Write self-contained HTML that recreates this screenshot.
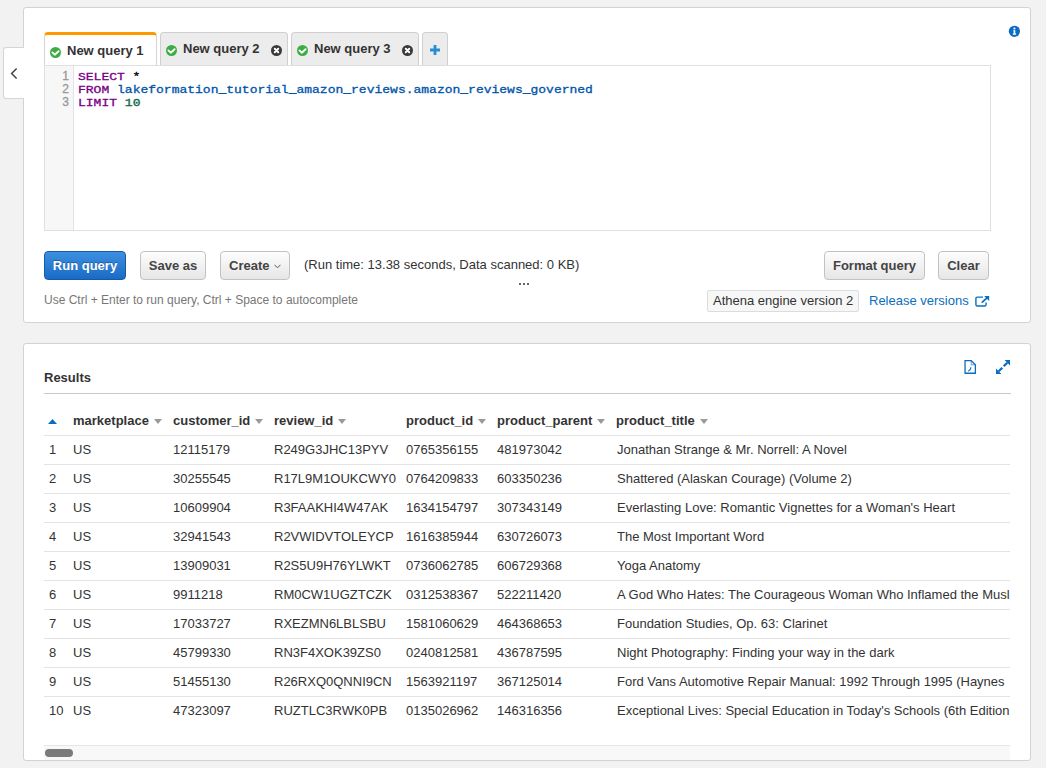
<!DOCTYPE html>
<html><head><meta charset="utf-8">
<style>
*{box-sizing:border-box;margin:0;padding:0}
html,body{width:1046px;height:768px;overflow:hidden;background:#f2f2f2;font-family:"Liberation Sans",sans-serif;color:#333}
.abs{position:absolute}
.panel{position:absolute;left:23px;width:1008px;background:#fff;border:1px solid #d3d3d3;border-radius:3px}
#p1{top:7px;height:316px}
#p2{top:343px;height:418px}
#collapse{position:absolute;left:3px;top:47px;width:21px;height:52px;background:#fff;border:1px solid #d5d5d5;border-right:none;border-radius:3px 0 0 3px}
.tab{position:absolute;top:32px;height:34px;background:#ececec;border:1px solid #cfcfcf;border-bottom:none;border-radius:4px 4px 0 0;font-weight:bold;font-size:13px;color:#333}
.tab.active{background:#fff;border-top:3px solid #ff9900;border-color:#ff9900 #d5d5d5 #d5d5d5 #d5d5d5}
.tab .lbl{position:absolute;top:8px;white-space:nowrap}
.chk{position:absolute;width:11px;height:11px}
.cls{position:absolute;width:11px;height:11px}
#editor{position:absolute;left:44px;top:65px;width:947px;height:166px;border:1px solid #e0e0e0;background:#fff}
#gutter{position:absolute;left:0;top:0;width:29px;height:164px;background:#f7f7f7;border-right:1px solid #e3e3e3}
.ln{position:absolute;right:4px;font-family:"Liberation Sans",sans-serif;font-size:12px;color:#999;line-height:13px;-webkit-text-stroke:0.3px}
.code{position:absolute;left:33px;font-family:"Liberation Mono",monospace;font-size:13px;line-height:13px;white-space:pre;color:#000;-webkit-text-stroke:0.35px;transform:scaleY(0.9);transform-origin:0 50%}
.kw{color:#708}
.id{color:#05a}
.num{color:#164}
.btn{position:absolute;top:251px;height:29px;border:1px solid #c2c2c2;border-radius:4px;background:linear-gradient(#fdfdfd,#e6e6e6);font-weight:bold;font-size:13px;color:#444;text-align:center;line-height:27px;white-space:nowrap}
.btn.primary{background:linear-gradient(#3d8fe0,#1a6bc6);border-color:#175aa3;color:#fff;text-shadow:0 -1px 0 rgba(0,0,0,0.3)}
.txt{position:absolute;white-space:nowrap}

#tbl{position:absolute;left:44px;top:393px;width:966px;height:367px;overflow:hidden}
.hdr{position:absolute;left:0;top:0;width:966px;height:42px}
.h{position:absolute;top:20px;font-weight:bold;font-size:13px;line-height:15px;color:#333;white-space:nowrap}
.h i{display:inline-block;width:0;height:0;border-left:4.5px solid transparent;border-right:4.5px solid transparent;border-top:5px solid #9a9a9a;margin-left:5px;vertical-align:1px}
.row{position:absolute;left:0;width:966px;height:29px;border-top:1px solid #e3e3e3}
.c{position:absolute;top:6px;font-size:13px;line-height:15px;color:#333;white-space:nowrap}
</style></head><body>
<div class="panel" id="p1"></div>
<div id="collapse">
<svg class="abs" style="left:6px;top:20px" width="9" height="13" viewBox="0 0 9 13"><path d="M6.6 0.6 L1.6 5.6 L6.6 10.6" fill="none" stroke="#3c3c3c" stroke-width="1.4"/></svg>
</div>
<svg class="abs" style="left:1008px;top:25px" width="13" height="13" viewBox="0 0 13 13"><circle cx="6.4" cy="6.3" r="5.6" fill="#0a6cc2"/><path d="M5.2 5.2 H7.3 V8.6 H8.1 V9.7 H4.8 V8.6 H5.6 V6.3 H5.2 Z" fill="#fff"/><circle cx="6.4" cy="3.5" r="1.1" fill="#fff"/></svg>

<div class="tab active" style="left:44px;width:113px">
 <svg class="chk" style="left:5px;top:12px" viewBox="0 0 12 12"><circle cx="6" cy="6" r="6" fill="#3cad43"/><path d="M2.6 5.9 L5.2 8.4 L9.4 4.6" fill="none" stroke="#fff" stroke-width="2" stroke-linecap="round" stroke-linejoin="round"/></svg>
 <span class="lbl" style="left:22px;top:8px">New query 1</span>
</div>
<div class="tab" style="left:160px;width:128px">
 <svg class="chk" style="left:5px;top:12px" viewBox="0 0 12 12"><circle cx="6" cy="6" r="6" fill="#3cad43"/><path d="M2.6 5.9 L5.2 8.4 L9.4 4.6" fill="none" stroke="#fff" stroke-width="2" stroke-linecap="round" stroke-linejoin="round"/></svg>
 <span class="lbl" style="left:22px">New query 2</span>
 <svg class="cls" style="left:110px;top:12px" viewBox="0 0 12 12"><circle cx="6" cy="6" r="6" fill="#3a3a3a"/><path d="M4.1 4.1 L7.9 7.9 M7.9 4.1 L4.1 7.9" stroke="#fff" stroke-width="2.1" stroke-linecap="round"/></svg>
</div>
<div class="tab" style="left:291px;width:128px">
 <svg class="chk" style="left:5px;top:12px" viewBox="0 0 12 12"><circle cx="6" cy="6" r="6" fill="#3cad43"/><path d="M2.6 5.9 L5.2 8.4 L9.4 4.6" fill="none" stroke="#fff" stroke-width="2" stroke-linecap="round" stroke-linejoin="round"/></svg>
 <span class="lbl" style="left:22px">New query 3</span>
 <svg class="cls" style="left:110px;top:12px" viewBox="0 0 12 12"><circle cx="6" cy="6" r="6" fill="#3a3a3a"/><path d="M4.1 4.1 L7.9 7.9 M7.9 4.1 L4.1 7.9" stroke="#fff" stroke-width="2.1" stroke-linecap="round"/></svg>
</div>
<div class="tab" style="left:422px;width:26px">
 <svg class="abs" style="left:7px;top:12px" width="10" height="10" viewBox="0 0 10 10"><path d="M5 0 V10 M0 5 H10" stroke="#2a8dd2" stroke-width="2.8"/></svg>
</div>

<div id="editor">
 <div id="gutter">
  <div class="ln" style="top:4px">1</div>
  <div class="ln" style="top:17px">2</div>
  <div class="ln" style="top:30px">3</div>
 </div>
 <div class="code" style="top:4px"><span class="kw">SELECT</span> *</div>
 <div class="code" style="top:17px"><span class="kw">FROM</span> <span class="id">lakeformation_tutorial_amazon_reviews.amazon_reviews_governed</span></div>
 <div class="code" style="top:30px"><span class="kw">LIMIT</span> <span class="num">10</span></div>
</div>

<div class="btn primary" style="left:44px;width:82px">Run query</div>
<div class="btn" style="left:140px;width:66px">Save as</div>
<div class="btn" style="left:220px;width:70px;text-align:left;padding-left:8px">Create <svg style="position:absolute;left:53px;top:12px" width="7" height="5" viewBox="0 0 7 5"><path d="M0.5 0.8 L3.5 3.8 L6.5 0.8" fill="none" stroke="#555" stroke-width="1"/></svg></div>
<div class="txt" style="left:304px;top:257px;font-size:13px;color:#333">(Run time: 13.38 seconds, Data scanned: 0 KB)</div>
<div class="abs" style="left:519px;top:283px;width:2px;height:2px;background:#666"></div>
<div class="abs" style="left:523px;top:283px;width:2px;height:2px;background:#666"></div>
<div class="abs" style="left:527px;top:283px;width:2px;height:2px;background:#666"></div>
<div class="btn" style="left:824px;width:101px">Format query</div>
<div class="btn" style="left:938px;width:51px">Clear</div>
<div class="txt" style="left:44px;top:293px;font-size:12px;color:#777">Use Ctrl + Enter to run query, Ctrl + Space to autocomplete</div>
<div class="abs" style="left:707px;top:290px;width:152px;height:22px;background:#f7f7f7;border:1px solid #dcdcdc;border-radius:2px;font-size:13px;color:#333;line-height:20px;padding-left:5px;white-space:nowrap">Athena engine version 2</div>
<div class="txt" style="left:869px;top:293px;font-size:13px;color:#0a6ebd">Release versions</div>
<svg class="abs" style="left:975px;top:295px" width="15" height="13" viewBox="0 0 15 13"><path d="M8 2.1 H2.4 Q0.9 2.1 0.9 3.6 V9.5 Q0.9 11 2.4 11 H9.6 Q11.1 11 11.1 9.5 V7.6" fill="none" stroke="#0a6ebd" stroke-width="1.4"/><path d="M14.2 1 H9.2 L14.2 6 Z" fill="#0a6ebd"/><path d="M6.8 7.6 L12 2.9" stroke="#0a6ebd" stroke-width="1.8"/></svg>

<div class="panel" id="p2"></div>

<div class="txt" style="left:44px;top:370px;font-size:13px;font-weight:bold;color:#333;line-height:15px">Results</div>
<svg class="abs" style="left:963px;top:359px" width="15" height="16" viewBox="0 0 15 16"><path d="M2.05 1.65 H8.2 L12.35 5.8 V14.25 H2.05 Z" fill="none" stroke="#0a6cc2" stroke-width="1.3" stroke-linejoin="miter"/><path d="M8.2 1.65 V5.8 H12.35" fill="none" stroke="#0a6cc2" stroke-width="0.8" opacity="0.8"/><path d="M5.3 12.2 Q7.6 11 8 8.3" fill="none" stroke="#0a6cc2" stroke-width="1.1"/></svg>
<svg class="abs" style="left:995px;top:359px" width="16" height="16" viewBox="0 0 16 16"><path d="M15 1 H9.6 L15 6.4 Z M1 15 V9.6 L6.4 15 Z" fill="#0a6cc2"/><path d="M12.3 3.7 L8.7 7.3 M3.7 12.3 L7.3 8.7" stroke="#0a6cc2" stroke-width="2.2"/></svg>
<div class="abs" style="left:44px;top:393px;width:967px;height:1px;background:#c9c9c9"></div>
<div id="tbl">
<div class="hdr">
 <svg class="abs" style="left:4px;top:26px" width="9" height="5" viewBox="0 0 9 5"><path d="M0 5 L4.5 0 L9 5 Z" fill="#0a6cc2"/></svg>
 <span class="h" style="left:29px">marketplace<i></i></span>
 <span class="h" style="left:129px">customer_id<i></i></span>
 <span class="h" style="left:230px">review_id<i></i></span>
 <span class="h" style="left:362px">product_id<i></i></span>
 <span class="h" style="left:453px">product_parent<i></i></span>
 <span class="h" style="left:572px">product_title<i></i></span>
</div>
<div class="row" style="top:42px">
<span class="c" style="left:5px">1</span>
<span class="c" style="left:29px">US</span>
<span class="c" style="left:129px">12115179</span>
<span class="c" style="left:230px">R249G3JHC13PYV</span>
<span class="c" style="left:362px">0765356155</span>
<span class="c" style="left:453px">481973042</span>
<span class="c" style="left:573px">Jonathan Strange &amp; Mr. Norrell: A Novel</span>
</div>
<div class="row" style="top:71px">
<span class="c" style="left:5px">2</span>
<span class="c" style="left:29px">US</span>
<span class="c" style="left:129px">30255545</span>
<span class="c" style="left:230px">R17L9M1OUKCWY0</span>
<span class="c" style="left:362px">0764209833</span>
<span class="c" style="left:453px">603350236</span>
<span class="c" style="left:573px">Shattered (Alaskan Courage) (Volume 2)</span>
</div>
<div class="row" style="top:100px">
<span class="c" style="left:5px">3</span>
<span class="c" style="left:29px">US</span>
<span class="c" style="left:129px">10609904</span>
<span class="c" style="left:230px">R3FAAKHI4W47AK</span>
<span class="c" style="left:362px">1634154797</span>
<span class="c" style="left:453px">307343149</span>
<span class="c" style="left:573px">Everlasting Love: Romantic Vignettes for a Woman's Heart</span>
</div>
<div class="row" style="top:129px">
<span class="c" style="left:5px">4</span>
<span class="c" style="left:29px">US</span>
<span class="c" style="left:129px">32941543</span>
<span class="c" style="left:230px">R2VWIDVTOLEYCP</span>
<span class="c" style="left:362px">1616385944</span>
<span class="c" style="left:453px">630726073</span>
<span class="c" style="left:573px">The Most Important Word</span>
</div>
<div class="row" style="top:158px">
<span class="c" style="left:5px">5</span>
<span class="c" style="left:29px">US</span>
<span class="c" style="left:129px">13909031</span>
<span class="c" style="left:230px">R2S5U9H76YLWKT</span>
<span class="c" style="left:362px">0736062785</span>
<span class="c" style="left:453px">606729368</span>
<span class="c" style="left:573px">Yoga Anatomy</span>
</div>
<div class="row" style="top:187px">
<span class="c" style="left:5px">6</span>
<span class="c" style="left:29px">US</span>
<span class="c" style="left:129px">9911218</span>
<span class="c" style="left:230px">RM0CW1UGZTCZK</span>
<span class="c" style="left:362px">0312538367</span>
<span class="c" style="left:453px">522211420</span>
<span class="c" style="left:573px">A God Who Hates: The Courageous Woman Who Inflamed the Muslim World Speaks Out</span>
</div>
<div class="row" style="top:216px">
<span class="c" style="left:5px">7</span>
<span class="c" style="left:29px">US</span>
<span class="c" style="left:129px">17033727</span>
<span class="c" style="left:230px">RXEZMN6LBLSBU</span>
<span class="c" style="left:362px">1581060629</span>
<span class="c" style="left:453px">464368653</span>
<span class="c" style="left:573px">Foundation Studies, Op. 63: Clarinet</span>
</div>
<div class="row" style="top:245px">
<span class="c" style="left:5px">8</span>
<span class="c" style="left:29px">US</span>
<span class="c" style="left:129px">45799330</span>
<span class="c" style="left:230px">RN3F4XOK39ZS0</span>
<span class="c" style="left:362px">0240812581</span>
<span class="c" style="left:453px">436787595</span>
<span class="c" style="left:573px">Night Photography: Finding your way in the dark</span>
</div>
<div class="row" style="top:274px">
<span class="c" style="left:5px">9</span>
<span class="c" style="left:29px">US</span>
<span class="c" style="left:129px">51455130</span>
<span class="c" style="left:230px">R26RXQ0QNNI9CN</span>
<span class="c" style="left:362px">1563921197</span>
<span class="c" style="left:453px">367125014</span>
<span class="c" style="left:573px">Ford Vans Automotive Repair Manual: 1992 Through 1995 (Haynes</span>
</div>
<div class="row" style="top:303px">
<span class="c" style="left:5px">10</span>
<span class="c" style="left:29px">US</span>
<span class="c" style="left:129px">47323097</span>
<span class="c" style="left:230px">RUZTLC3RWK0PB</span>
<span class="c" style="left:362px">0135026962</span>
<span class="c" style="left:453px">146316356</span>
<span class="c" style="left:573px">Exceptional Lives: Special Education in Today's Schools (6th Edition</span>
</div>
<div class="abs" style="left:0;top:352px;width:967px;height:15px;background:#f8f8f8;border-top:1px solid #e6e6e6"></div>
<div class="abs" style="left:1px;top:356px;width:28px;height:8px;background:#7a7a7a;border-radius:4px"></div>
</div>
</body></html>
